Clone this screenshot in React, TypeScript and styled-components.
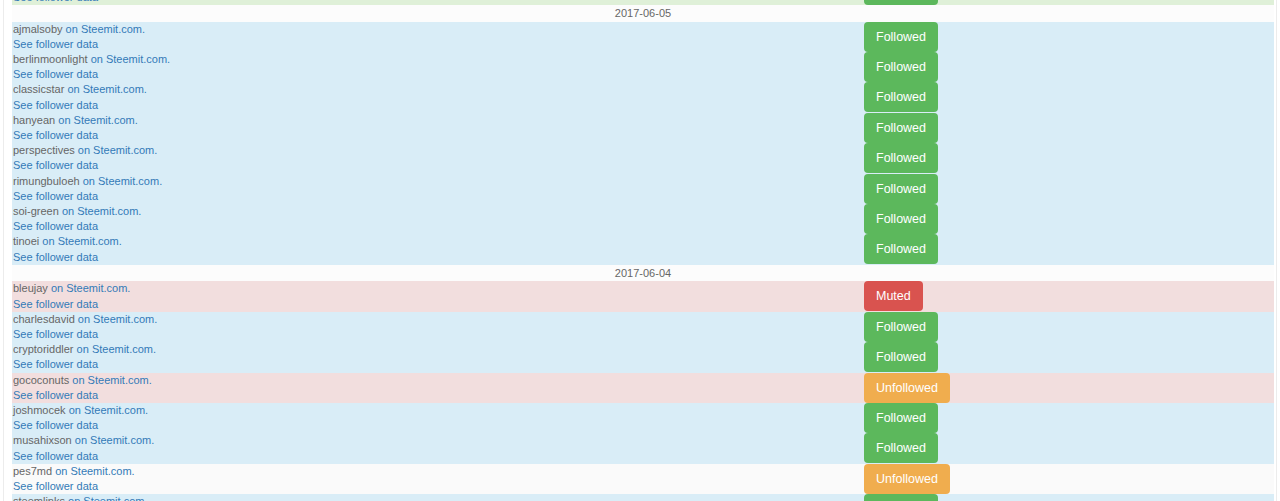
import React from "react";
import styled, { createGlobalStyle } from "styled-components";

const Global = createGlobalStyle`
  html, body { margin: 0; padding: 0; background: #ffffff; }
  body { font-family: "Liberation Sans", Arial, Helvetica, sans-serif; overflow: hidden; }
`;

const Page = styled.div`
  height: 501px;
  overflow: hidden;
  margin: 0 3px;
  border-left: 1px solid #ececec;
  border-right: 1px solid #ececec;
  padding: 0 2px 0 8px;
`;

const Table = styled.table`
  width: 100%;
  border-collapse: collapse;
  table-layout: fixed;
  margin-top: -25.4px;
  font-size: 11px;
`;

type Tone = "info" | "danger" | "success" | "plain";

const toneBg: Record<Tone, string> = {
  info: "#d9edf7",
  danger: "#f2dede",
  success: "#dff0d8",
  plain: "#fafafa",
};

const Row = styled.tr<{ $tone: Tone }>`
  height: 30.4px;
  background: ${(p) => toneBg[p.$tone]};
`;

const DateRow = styled.tr`
  height: 16.6px;
  background: #fcfcfc;
`;

const DateCell = styled.td`
  padding: 0;
  text-align: center;
  color: #666;
  font-size: 11px;
  line-height: 16px;
`;

const NameCell = styled.td`
  padding: 0 0 0 1px;
  vertical-align: top;
  line-height: 15.2px;
  color: #666;
`;

const ActionCell = styled.td`
  padding: 0;
  vertical-align: top;
`;

const Line = styled.div`
  white-space: nowrap;
`;

const Link = styled.a`
  color: #337ab7;
  text-decoration: none;
`;

type Status = "Followed" | "Muted" | "Unfollowed";

const statusBg: Record<Status, string> = {
  Followed: "#5cb85c",
  Muted: "#d9534f",
  Unfollowed: "#f0ad4e",
};

const StatusButton = styled.button<{ $status: Status }>`
  height: 30px;
  padding: 0 12px;
  border: none;
  border-radius: 4px;
  background: ${(p) => statusBg[p.$status]};
  color: #ffffff;
  font-family: "Liberation Sans", Arial, Helvetica, sans-serif;
  font-size: 12.5px;
  line-height: 30px;
  cursor: pointer;
  display: block;
`;

type Entry = { name: string; tone: Tone; status: Status };

const groups: { date: string | null; entries: Entry[] }[] = [
  { date: null, entries: [{ name: "steemitwhale", tone: "success", status: "Followed" }] },
  {
    date: "2017-06-05",
    entries: [
      { name: "ajmalsoby", tone: "info", status: "Followed" },
      { name: "berlinmoonlight", tone: "info", status: "Followed" },
      { name: "classicstar", tone: "info", status: "Followed" },
      { name: "hanyean", tone: "info", status: "Followed" },
      { name: "perspectives", tone: "info", status: "Followed" },
      { name: "rimungbuloeh", tone: "info", status: "Followed" },
      { name: "soi-green", tone: "info", status: "Followed" },
      { name: "tinoei", tone: "info", status: "Followed" },
    ],
  },
  {
    date: "2017-06-04",
    entries: [
      { name: "bleujay", tone: "danger", status: "Muted" },
      { name: "charlesdavid", tone: "info", status: "Followed" },
      { name: "cryptoriddler", tone: "info", status: "Followed" },
      { name: "gococonuts", tone: "danger", status: "Unfollowed" },
      { name: "joshmocek", tone: "info", status: "Followed" },
      { name: "musahixson", tone: "info", status: "Followed" },
      { name: "pes7md", tone: "plain", status: "Unfollowed" },
      { name: "steemlinks", tone: "info", status: "Followed" },
      { name: "sweetsssj", tone: "info", status: "Followed" },
    ],
  },
];

export default function App() {
  return (
    <>
      <Global />
      <Page>
        <Table>
          <colgroup>
            <col style={{ width: "852px" }} />
            <col />
          </colgroup>
          <tbody>
            {groups.map((g, gi) => (
              <React.Fragment key={gi}>
                {g.date && (
                  <DateRow>
                    <DateCell colSpan={2}>{g.date}</DateCell>
                  </DateRow>
                )}
                {g.entries.map((e) => (
                  <Row key={e.name} $tone={e.tone}>
                    <NameCell>
                      <Line>
                        {e.name} <Link href="#">on Steemit.com.</Link>
                      </Line>
                      <Line>
                        <Link href="#">See follower data</Link>
                      </Line>
                    </NameCell>
                    <ActionCell>
                      <StatusButton $status={e.status}>{e.status}</StatusButton>
                    </ActionCell>
                  </Row>
                ))}
              </React.Fragment>
            ))}
          </tbody>
        </Table>
      </Page>
    </>
  );
}
